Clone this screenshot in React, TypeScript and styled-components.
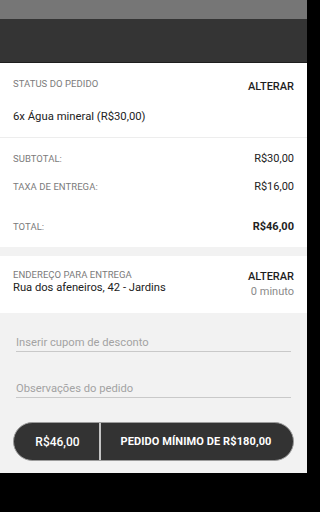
import styled, { createGlobalStyle } from "styled-components";

const GlobalStyle = createGlobalStyle`
  html, body {
    margin: 0;
    padding: 0;
    background: #000;
    overflow: hidden;
  }
  body {
    font-family: Roboto, "Liberation Sans", sans-serif;
    -webkit-font-smoothing: antialiased;
  }
  * {
    box-sizing: border-box;
  }
`;

const orderData = {
  items: "6x Água mineral (R$30,00)",
  subtotal: "R$30,00",
  fee: "R$16,00",
  total: "R$46,00",
  address: "Rua dos afeneiros, 42 - Jardins",
  eta: "0 minuto",
  minimum: "PEDIDO MÍNIMO DE R$180,00",
};

const App = () => {
  return (
    <>
      <GlobalStyle />
      <Screen>
        <StatusBar />
        <Header />

        <Card>
          <HeadRow>
            <Label>STATUS DO PEDIDO</Label>
            <Action $offset={2}>ALTERAR</Action>
          </HeadRow>
          <ItemText>{orderData.items}</ItemText>
        </Card>

        <Totals>
          <TotalRow>
            <Label>SUBTOTAL:</Label>
            <Value>{orderData.subtotal}</Value>
          </TotalRow>
          <TotalRow>
            <Label>TAXA DE ENTREGA:</Label>
            <Value>{orderData.fee}</Value>
          </TotalRow>
          <TotalRow $spaced>
            <Label>TOTAL:</Label>
            <Value $bold>{orderData.total}</Value>
          </TotalRow>
        </Totals>

        <AddressCard>
          <AddressInfo>
            <Label>ENDEREÇO PARA ENTREGA</Label>
            <AddressText>{orderData.address}</AddressText>
          </AddressInfo>
          <AddressSide>
            <Action>ALTERAR</Action>
            <Eta>{orderData.eta}</Eta>
          </AddressSide>
        </AddressCard>

        <Form>
          <Field placeholder="Inserir cupom de desconto" />
          <Field placeholder="Observações do pedido" />
          <CheckoutButton>
            <PricePart>{orderData.total}</PricePart>
            <MinimumPart>{orderData.minimum}</MinimumPart>
          </CheckoutButton>
        </Form>

        <NavBar />
      </Screen>
    </>
  );
};

export default App;

const Screen = styled.div`
  width: 307px;
  height: 512px;
  display: flex;
  flex-direction: column;
  background: #f2f2f2;
  overflow: hidden;

  & > * {
    flex-shrink: 0;
  }
`;

const StatusBar = styled.div`
  height: 19px;
  background: #767676;
`;

const Header = styled.div`
  height: 44px;
  background: #343434;
  border-bottom: 1px solid #1e1e1e;
`;

const Card = styled.section`
  background: #fff;
  padding: 15px 13px 13px 13px;
  border-bottom: 1px solid #ededed;
`;

const HeadRow = styled.div`
  display: flex;
  justify-content: space-between;
  align-items: flex-start;
  height: 15px;
`;

const Label = styled.span`
  font-size: 9.5px;
  line-height: 12px;
  color: #7b7b7b;
  letter-spacing: 0.05px;
`;

const Action = styled.span<{ $offset?: number }>`
  font-size: 11px;
  line-height: 13px;
  font-weight: 500;
  color: #1e1e1e;
  margin-top: ${({ $offset }) => $offset ?? 0}px;
`;

const ItemText = styled.p`
  margin: 16px 0 0 0;
  font-size: 11.3px;
  line-height: 15px;
  color: #222;
`;

const Totals = styled.section`
  background: #fff;
  padding: 14px 13px 13px 13px;
  display: flex;
  flex-direction: column;
  gap: 14px;
`;

const TotalRow = styled.div<{ $spaced?: boolean }>`
  display: flex;
  justify-content: space-between;
  align-items: baseline;
  height: 14px;
  line-height: 14px;
  margin-top: ${({ $spaced }) => ($spaced ? "12px" : "0")};
`;

const Value = styled.span<{ $bold?: boolean }>`
  font-size: 11px;
  line-height: 14px;
  color: #222;
  font-weight: ${({ $bold }) => ($bold ? 700 : 400)};
`;

const AddressCard = styled.section`
  margin-top: 9px;
  background: #fff;
  height: 57px;
  padding: 13px 13px 0 13px;
  display: flex;
  justify-content: space-between;
`;

const AddressInfo = styled.div`
  display: flex;
  flex-direction: column;
`;

const AddressText = styled.span`
  font-size: 11.2px;
  line-height: 14px;
  color: #222;
`;

const AddressSide = styled.div`
  display: flex;
  flex-direction: column;
  align-items: flex-end;
  padding-top: 1px;
  gap: 2px;
`;

const Eta = styled.span`
  font-size: 11px;
  line-height: 13px;
  color: #8a8a8a;
`;

const Form = styled.section`
  flex: 1;
  padding: 20px 13px 12px 13px;
  display: flex;
  flex-direction: column;
`;

const Field = styled.input`
  display: block;
  margin: 0 3px 27px 3px;
  width: calc(100% - 6px);
  height: 19px;
  border: none;
  border-bottom: 1px solid #c9c9c9;
  background: transparent;
  font-family: Roboto, "Liberation Sans", sans-serif;
  font-size: 11.2px;
  padding: 0;
  color: #222;
  outline: none;

  &::placeholder {
    color: #a3a3a3;
  }

  & + & {
    margin-bottom: 24px;
  }
`;

const CheckoutButton = styled.button`
  width: 100%;
  height: 39px;
  display: flex;
  padding: 0;
  border: 1px solid #9c9c9c;
  border-radius: 20px;
  background: #333;
  overflow: hidden;
  font-family: Roboto, "Liberation Sans", sans-serif;
  cursor: pointer;
`;

const PricePart = styled.span`
  width: 87px;
  display: flex;
  align-items: center;
  justify-content: center;
  font-size: 12px;
  font-weight: 500;
  color: #fff;
  border-right: 2px solid #c4c4c4;
  padding-left: 2px;
`;

const MinimumPart = styled.span`
  flex: 1;
  display: flex;
  align-items: center;
  justify-content: center;
  font-size: 11px;
  font-weight: 700;
  color: #fff;
  letter-spacing: 0.1px;
  padding-right: 2px;
`;

const NavBar = styled.div`
  height: 39px;
  background: #000;
`;
